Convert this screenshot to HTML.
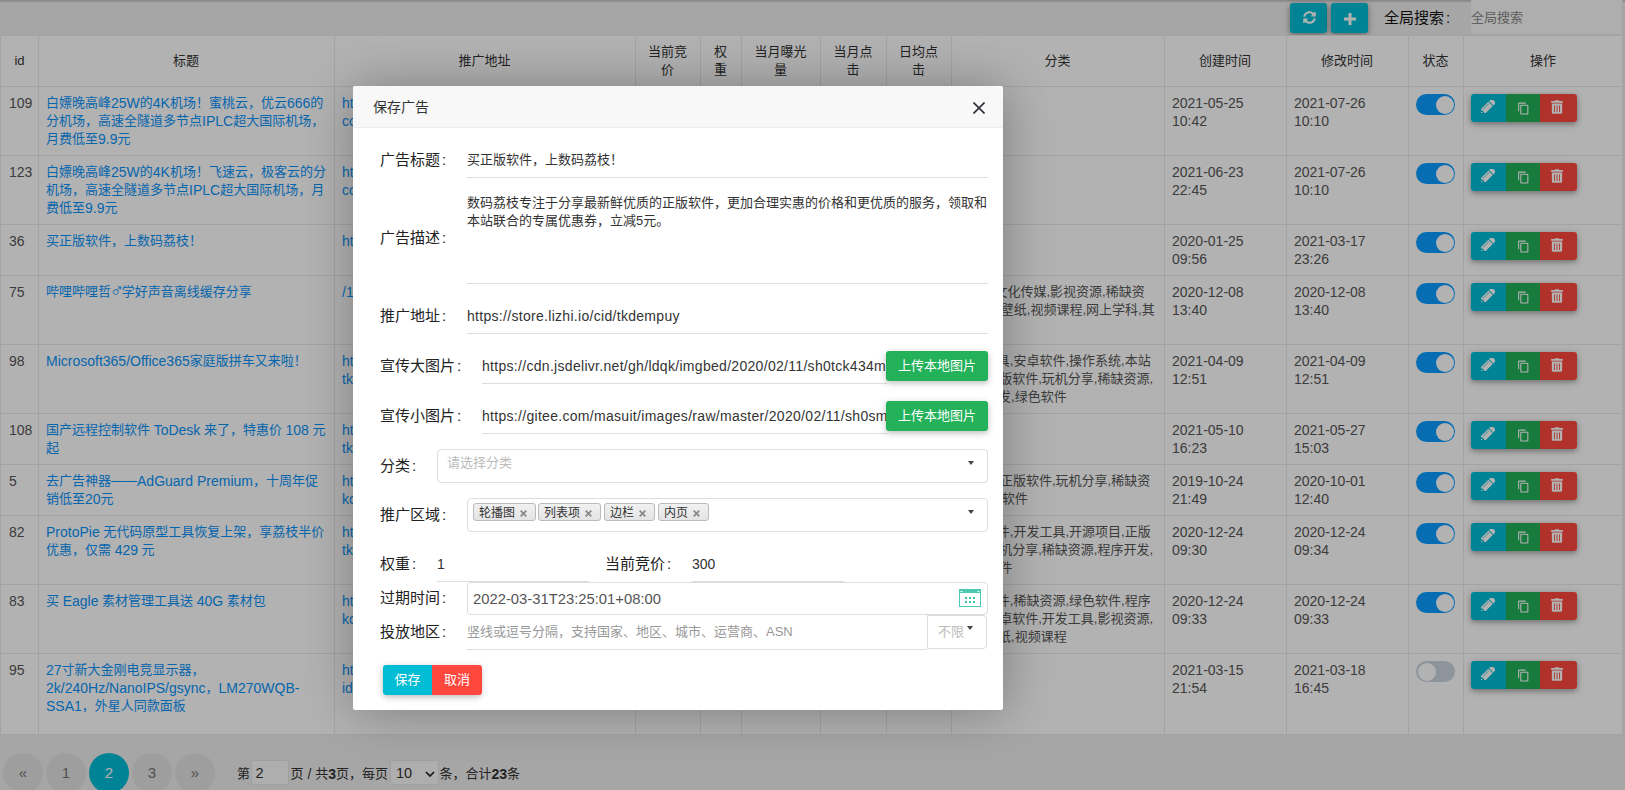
<!DOCTYPE html>
<html lang="zh-CN"><head><meta charset="utf-8"><title>广告管理</title>
<style>
*{box-sizing:border-box}
html,body{margin:0;padding:0}
body{width:1625px;height:790px;overflow:hidden;background:#eee;font-family:"Liberation Sans","Noto Sans CJK SC",sans-serif;font-size:13px;line-height:18px;color:#333;position:relative}
.abs{position:absolute}
#page{position:absolute;left:0;top:0;width:1625px;height:790px;overflow:hidden}
.topshade{position:absolute;left:0;top:0;width:1625px;height:3px;background:linear-gradient(#bbb,#eee)}
.tbtn{position:absolute;top:3px;width:37px;height:30px;background:#00bcd4;border-radius:3px;box-shadow:0 2px 5px rgba(0,0,0,.26),0 2px 10px rgba(0,0,0,.16)}
.slabel{position:absolute;left:1384px;top:8px;font-size:15px;line-height:20px;color:#111;white-space:nowrap}
.sinput{position:absolute;left:1471px;top:0;width:152px;height:34px;background:#fafafa;color:#888;font-size:13px;line-height:36px;white-space:nowrap;border-right:1px solid #e6e6e6}
#tbl{position:absolute;left:0;top:0;width:1625px;height:790px}
#tbg{position:absolute;left:0;top:35px;width:1623px;height:700px;background:#fff}
.vl{position:absolute;top:35px;width:1px;height:700px;background:#eaeaea}
.hl{position:absolute;left:0;width:1623px;height:1px;background:#eaeaea}
.th{position:absolute;top:36px;height:50px;display:flex;align-items:center;justify-content:center;text-align:center;color:#333}
.td{position:absolute;padding:8px 8px 0 8px;color:#565656}
.td.t{color:#0a93f8}
.td.u{color:#0a93f8;white-space:nowrap;overflow:hidden}
.cl{position:absolute;white-space:nowrap;color:#565656;line-height:18px}
.ms{display:inline-block;transform:scale(1.45);transform-origin:50% 60%;margin:0 .5px}
.l{font-size:14px;line-height:0;position:relative;top:1px}
.sw{position:absolute;width:39px;height:21px;border-radius:11px;background:#0a9cff}
.sw i{position:absolute;top:1.500px;right:1.500px;width:18px;height:18px;border-radius:50%;background:#fff}
.sw.off{background:#cbd5e0}
.sw.off i{right:auto;left:1.500px}
.bg{position:absolute;width:106px;height:28px;border-radius:3px;overflow:hidden;display:flex}
.bgs{position:absolute;width:106px;height:28px;border-radius:3px;box-shadow:0 2px 5px rgba(0,0,0,.26),0 2px 10px rgba(0,0,0,.16)}
.bg span{display:flex;align-items:center;justify-content:center;height:28px}
.b1{width:35px;background:#00bcd4}.b2{width:34px;background:#23b15a}.b3{width:37px;background:#fe483e}
.pg{position:absolute;top:753px;width:40px;height:40px;border-radius:50%;background:#e3e3e3;color:#747474;text-align:center;line-height:40px;font-size:15px}
.pg.a{background:#00bcd4;color:#fff}
.ptxt{position:absolute;top:764px;white-space:nowrap;line-height:20px;font-size:13px;color:#333}
.pin{position:absolute;top:760px;height:25px;border:1px solid #e6e6e6;background:#f9f9f9;border-radius:2px;line-height:24px;font-size:14.500px;color:#333}
#shade{position:absolute;left:0;top:0;width:1625px;height:790px;background:rgba(0,0,0,.3)}
#dlg{position:absolute;left:353px;top:86px;width:650px;height:624px;background:#fff;border-radius:2px;box-shadow:1px 1px 50px rgba(0,0,0,.3)}
#dlg .hd{position:absolute;left:0;top:0;width:650px;height:42px;background:#f8f8f8;border-bottom:1px solid #eee;border-radius:2px 2px 0 0;padding-left:20px;line-height:42px;font-size:14px;color:#333}
.lb{position:absolute;left:27px;font-size:15px;line-height:20px;color:#222;white-space:nowrap}
.cn{font-style:normal;margin-left:2px}
.ul{position:absolute;height:1px;background:#ddd}
.val{position:absolute;white-space:nowrap;color:#333;font-size:13px;line-height:18px;overflow:hidden}
.box{position:absolute;border:1px solid #ddd;border-radius:4px;background:#fff}
.tag{position:absolute;top:4px;height:18px;border:1px solid #bbb;border-radius:3px;background:linear-gradient(#f1f1f1,#e4e4e4);font-size:12px;line-height:17px;padding-top:1px;color:#333;padding-left:5px;white-space:nowrap}
.tag b{font-weight:bold;color:#888;font-size:12px;margin-left:4px}
.arr{position:absolute;width:0;height:0;border-left:3.5px solid transparent;border-right:3.5px solid transparent;border-top:4px solid #444}
.gbtn{position:absolute;left:533px;width:102px;height:30px;background:#23b15a;border-radius:3px;color:#fff;text-align:center;line-height:30px;font-size:13px;box-shadow:0 2px 5px rgba(0,0,0,.16),0 2px 10px rgba(0,0,0,.12)}
.fbtn{position:absolute;top:579px;height:30px;width:49px;color:#fff;text-align:center;line-height:30px;font-size:13px}
</style></head><body>
<div id="page">
<div class="topshade"></div>

<div class="tbtn" style="left:1290px"><svg style="position:absolute;left:12.600px;top:7.500px" width="13" height="13" viewBox="0 0 512 512"><path fill="#fff" d="M370.720 133.280C339.458 104.008 298.888 87.962 255.848 88c-77.458.068-144.328 53.178-162.791 126.850-1.344 5.363-6.122 9.150-11.651 9.150H24.103c-7.498 0-13.194-6.807-11.807-14.176C33.933 94.924 134.813 8 256 8c66.448 0 126.791 26.136 171.315 68.685L463.030 40.970C478.149 25.851 504 36.559 504 57.941V192c0 13.255-10.745 24-24 24H345.941c-21.382 0-32.090-25.851-16.971-40.971l41.750-41.749zM32 296h134.059c21.382 0 32.090 25.851 16.971 40.971l-41.750 41.750c31.262 29.273 71.835 45.319 114.876 45.280 77.418-.07 144.315-53.144 162.787-126.849 1.344-5.363 6.122-9.150 11.651-9.150h57.304c7.498 0 13.194 6.807 11.807 14.176C478.067 417.076 377.187 504 256 504c-66.448 0-126.791-26.136-171.315-68.685L48.970 471.030C33.851 486.149 8 475.441 8 454.059V320c0-13.255 10.745-24 24-24z"/></svg></div>
<div class="tbtn" style="left:1331px"><svg style="position:absolute;left:12.500px;top:9.500px" width="12" height="12" viewBox="0 0 12 12"><path fill="#fff" d="M4.500 0h3v4.500h4.500v3h-4.500v4.500h-3v-4.500H0v-3h4.500z"/></svg></div>
<div class="slabel">全局搜索<i class="cn">:</i></div>
<div class="sinput">全局搜索</div>
<div id="tbl"><div id="tbg"></div>
<div class="hl" style="top:35px"></div>
<div class="vl" style="left:0px"></div>
<div class="vl" style="left:38px"></div>
<div class="vl" style="left:334px"></div>
<div class="vl" style="left:635px"></div>
<div class="vl" style="left:700px"></div>
<div class="vl" style="left:741px"></div>
<div class="vl" style="left:820px"></div>
<div class="vl" style="left:886px"></div>
<div class="vl" style="left:951px"></div>
<div class="vl" style="left:1164px"></div>
<div class="vl" style="left:1286px"></div>
<div class="vl" style="left:1408px"></div>
<div class="vl" style="left:1463px"></div>
<div class="vl" style="left:1622px"></div>
<div class="hl" style="top:86px"></div>
<div class="hl" style="top:155px"></div>
<div class="hl" style="top:224px"></div>
<div class="hl" style="top:275px"></div>
<div class="hl" style="top:344px"></div>
<div class="hl" style="top:413px"></div>
<div class="hl" style="top:464px"></div>
<div class="hl" style="top:515px"></div>
<div class="hl" style="top:584px"></div>
<div class="hl" style="top:653px"></div>
<div class="hl" style="top:734px"></div>
<div class="th" style="left:1px;width:37px"><span>id</span></div>
<div class="th" style="left:38px;width:296px"><span>标题</span></div>
<div class="th" style="left:334px;width:301px"><span>推广地址</span></div>
<div class="th" style="left:635px;width:65px"><span>当前竞<br>价</span></div>
<div class="th" style="left:700px;width:41px"><span>权<br>重</span></div>
<div class="th" style="left:741px;width:79px"><span>当月曝光<br>量</span></div>
<div class="th" style="left:820px;width:66px"><span>当月点<br>击</span></div>
<div class="th" style="left:886px;width:65px"><span>日均点<br>击</span></div>
<div class="th" style="left:951px;width:213px"><span>分类</span></div>
<div class="th" style="left:1164px;width:122px"><span>创建时间</span></div>
<div class="th" style="left:1286px;width:122px"><span>修改时间</span></div>
<div class="th" style="left:1408px;width:55px"><span>状态</span></div>
<div class="th" style="left:1463px;width:160px"><span>操作</span></div>
<div class="td " style="left:1px;top:86px;width:37px;height:69px;"><span class="l">109</span></div>
<div class="td t" style="left:38px;top:86px;width:296px;height:69px;">白嫖晚高峰<span class="l">25W</span>的<span class="l">4K</span>机场！蜜桃云，优云<span class="l">666</span>的分机场，高速全隧道多节点<span class="l">IPLC</span>超大国际机场，月费低至<span class="l">9.9</span>元</div>
<div class="td u" style="left:334px;top:86px;width:301px;height:69px;"><span class="l">https://store.example/</span><br><span class="l">co</span></div>
<div class="td " style="left:1164px;top:86px;width:122px;height:69px;"><span class="l">2021-05-25</span><br><span class="l">10:42</span></div>
<div class="td " style="left:1286px;top:86px;width:122px;height:69px;"><span class="l">2021-07-26</span><br><span class="l">10:10</span></div>
<div class="sw" style="left:1416px;top:94px"><i></i></div>
<div class="bgs" style="left:1471px;top:94px"></div>
<div class="bg" style="left:1471px;top:94px"><span class="b1"><svg class="ic" style="position:relative;left:-.7px;top:-1.400px" viewBox="256 256 1387 1280" width="14.500" height="13.500"><path fill="#fff" d="M491 1536l91-91-235-235-91 91v107h128v128h107zm523-928q0-22-22-22-10 0-17 7l-542 542q-7 7-7 17 0 22 22 22 10 0 17-7l542-542q7-7 7-17zm-54-192l416 416-832 832h-416v-416zm683 96q0 53-37 90l-166 166-416-416 166-165q36-38 90-38 53 0 91 38l235 234q37 39 37 91z"/></svg></span><span class="b2"><svg class="ic" style="position:relative;left:.5px;top:0" viewBox="0 0 24 24" width="13" height="13"><path fill="#fff" d="M16 1H4c-1.100 0-2 .9-2 2v14h2V3h12V1zm3 4H8c-1.100 0-2 .9-2 2v14c0 1.100.9 2 2 2h11c1.100 0 2-.9 2-2V7c0-1.100-.9-2-2-2zm0 16H8V7h11v14z"/></svg></span><span class="b3"><svg class="ic" style="position:relative;left:-2px;top:-1.400px" viewBox="0 0 448 512" width="12" height="14"><path fill="#fff" d="M32 464a48 48 0 0 0 48 48h288a48 48 0 0 0 48-48V128H32zm272-256a16 16 0 0 1 32 0v224a16 16 0 0 1-32 0zm-96 0a16 16 0 0 1 32 0v224a16 16 0 0 1-32 0zm-96 0a16 16 0 0 1 32 0v224a16 16 0 0 1-32 0zM432 32H312l-9.400-18.700A24 24 0 0 0 281.100 0H166.800a23.720 23.720 0 0 0-21.400 13.300L136 32H16A16 16 0 0 0 0 48v32a16 16 0 0 0 16 16h416a16 16 0 0 0 16-16V48a16 16 0 0 0-16-16z"/></svg></span></div>
<div class="td " style="left:1px;top:155px;width:37px;height:69px;"><span class="l">123</span></div>
<div class="td t" style="left:38px;top:155px;width:296px;height:69px;">白嫖晚高峰<span class="l">25W</span>的<span class="l">4K</span>机场！飞速云，极客云的分机场，高速全隧道多节点<span class="l">IPLC</span>超大国际机场，月费低至<span class="l">9.9</span>元</div>
<div class="td u" style="left:334px;top:155px;width:301px;height:69px;"><span class="l">https://store.example/</span><br><span class="l">co</span></div>
<div class="td " style="left:1164px;top:155px;width:122px;height:69px;"><span class="l">2021-06-23</span><br><span class="l">22:45</span></div>
<div class="td " style="left:1286px;top:155px;width:122px;height:69px;"><span class="l">2021-07-26</span><br><span class="l">10:10</span></div>
<div class="sw" style="left:1416px;top:163px"><i></i></div>
<div class="bgs" style="left:1471px;top:163px"></div>
<div class="bg" style="left:1471px;top:163px"><span class="b1"><svg class="ic" style="position:relative;left:-.7px;top:-1.400px" viewBox="256 256 1387 1280" width="14.500" height="13.500"><path fill="#fff" d="M491 1536l91-91-235-235-91 91v107h128v128h107zm523-928q0-22-22-22-10 0-17 7l-542 542q-7 7-7 17 0 22 22 22 10 0 17-7l542-542q7-7 7-17zm-54-192l416 416-832 832h-416v-416zm683 96q0 53-37 90l-166 166-416-416 166-165q36-38 90-38 53 0 91 38l235 234q37 39 37 91z"/></svg></span><span class="b2"><svg class="ic" style="position:relative;left:.5px;top:0" viewBox="0 0 24 24" width="13" height="13"><path fill="#fff" d="M16 1H4c-1.100 0-2 .9-2 2v14h2V3h12V1zm3 4H8c-1.100 0-2 .9-2 2v14c0 1.100.9 2 2 2h11c1.100 0 2-.9 2-2V7c0-1.100-.9-2-2-2zm0 16H8V7h11v14z"/></svg></span><span class="b3"><svg class="ic" style="position:relative;left:-2px;top:-1.400px" viewBox="0 0 448 512" width="12" height="14"><path fill="#fff" d="M32 464a48 48 0 0 0 48 48h288a48 48 0 0 0 48-48V128H32zm272-256a16 16 0 0 1 32 0v224a16 16 0 0 1-32 0zm-96 0a16 16 0 0 1 32 0v224a16 16 0 0 1-32 0zm-96 0a16 16 0 0 1 32 0v224a16 16 0 0 1-32 0zM432 32H312l-9.400-18.700A24 24 0 0 0 281.100 0H166.800a23.720 23.720 0 0 0-21.400 13.300L136 32H16A16 16 0 0 0 0 48v32a16 16 0 0 0 16 16h416a16 16 0 0 0 16-16V48a16 16 0 0 0-16-16z"/></svg></span></div>
<div class="td " style="left:1px;top:224px;width:37px;height:51px;"><span class="l">36</span></div>
<div class="td t" style="left:38px;top:224px;width:296px;height:51px;">买正版软件，上数码荔枝！</div>
<div class="td u" style="left:334px;top:224px;width:301px;height:51px;"><span class="l">https://store.example/</span></div>
<div class="td " style="left:1164px;top:224px;width:122px;height:51px;"><span class="l">2020-01-25</span><br><span class="l">09:56</span></div>
<div class="td " style="left:1286px;top:224px;width:122px;height:51px;"><span class="l">2021-03-17</span><br><span class="l">23:26</span></div>
<div class="sw" style="left:1416px;top:232px"><i></i></div>
<div class="bgs" style="left:1471px;top:232px"></div>
<div class="bg" style="left:1471px;top:232px"><span class="b1"><svg class="ic" style="position:relative;left:-.7px;top:-1.400px" viewBox="256 256 1387 1280" width="14.500" height="13.500"><path fill="#fff" d="M491 1536l91-91-235-235-91 91v107h128v128h107zm523-928q0-22-22-22-10 0-17 7l-542 542q-7 7-7 17 0 22 22 22 10 0 17-7l542-542q7-7 7-17zm-54-192l416 416-832 832h-416v-416zm683 96q0 53-37 90l-166 166-416-416 166-165q36-38 90-38 53 0 91 38l235 234q37 39 37 91z"/></svg></span><span class="b2"><svg class="ic" style="position:relative;left:.5px;top:0" viewBox="0 0 24 24" width="13" height="13"><path fill="#fff" d="M16 1H4c-1.100 0-2 .9-2 2v14h2V3h12V1zm3 4H8c-1.100 0-2 .9-2 2v14c0 1.100.9 2 2 2h11c1.100 0 2-.9 2-2V7c0-1.100-.9-2-2-2zm0 16H8V7h11v14z"/></svg></span><span class="b3"><svg class="ic" style="position:relative;left:-2px;top:-1.400px" viewBox="0 0 448 512" width="12" height="14"><path fill="#fff" d="M32 464a48 48 0 0 0 48 48h288a48 48 0 0 0 48-48V128H32zm272-256a16 16 0 0 1 32 0v224a16 16 0 0 1-32 0zm-96 0a16 16 0 0 1 32 0v224a16 16 0 0 1-32 0zm-96 0a16 16 0 0 1 32 0v224a16 16 0 0 1-32 0zM432 32H312l-9.400-18.700A24 24 0 0 0 281.100 0H166.800a23.720 23.720 0 0 0-21.400 13.300L136 32H16A16 16 0 0 0 0 48v32a16 16 0 0 0 16 16h416a16 16 0 0 0 16-16V48a16 16 0 0 0-16-16z"/></svg></span></div>
<div class="td " style="left:1px;top:275px;width:37px;height:69px;"><span class="l">75</span></div>
<div class="td t" style="left:38px;top:275px;width:296px;height:69px;">哔哩哔哩哲<span class="ms">♂</span>学好声音离线缓存分享</div>
<div class="td u" style="left:334px;top:275px;width:301px;height:69px;"><span class="l">/1</span></div>
<div class="cl" style="right:480.3px;top:283px">文化传媒,影视资源,稀缺资</div>
<div class="cl" style="right:470.3px;top:301px">壁纸,视频课程,网上学科,其</div>
<div class="td " style="left:1164px;top:275px;width:122px;height:69px;"><span class="l">2020-12-08</span><br><span class="l">13:40</span></div>
<div class="td " style="left:1286px;top:275px;width:122px;height:69px;"><span class="l">2020-12-08</span><br><span class="l">13:40</span></div>
<div class="sw" style="left:1416px;top:283px"><i></i></div>
<div class="bgs" style="left:1471px;top:283px"></div>
<div class="bg" style="left:1471px;top:283px"><span class="b1"><svg class="ic" style="position:relative;left:-.7px;top:-1.400px" viewBox="256 256 1387 1280" width="14.500" height="13.500"><path fill="#fff" d="M491 1536l91-91-235-235-91 91v107h128v128h107zm523-928q0-22-22-22-10 0-17 7l-542 542q-7 7-7 17 0 22 22 22 10 0 17-7l542-542q7-7 7-17zm-54-192l416 416-832 832h-416v-416zm683 96q0 53-37 90l-166 166-416-416 166-165q36-38 90-38 53 0 91 38l235 234q37 39 37 91z"/></svg></span><span class="b2"><svg class="ic" style="position:relative;left:.5px;top:0" viewBox="0 0 24 24" width="13" height="13"><path fill="#fff" d="M16 1H4c-1.100 0-2 .9-2 2v14h2V3h12V1zm3 4H8c-1.100 0-2 .9-2 2v14c0 1.100.9 2 2 2h11c1.100 0 2-.9 2-2V7c0-1.100-.9-2-2-2zm0 16H8V7h11v14z"/></svg></span><span class="b3"><svg class="ic" style="position:relative;left:-2px;top:-1.400px" viewBox="0 0 448 512" width="12" height="14"><path fill="#fff" d="M32 464a48 48 0 0 0 48 48h288a48 48 0 0 0 48-48V128H32zm272-256a16 16 0 0 1 32 0v224a16 16 0 0 1-32 0zm-96 0a16 16 0 0 1 32 0v224a16 16 0 0 1-32 0zm-96 0a16 16 0 0 1 32 0v224a16 16 0 0 1-32 0zM432 32H312l-9.400-18.700A24 24 0 0 0 281.100 0H166.800a23.720 23.720 0 0 0-21.400 13.300L136 32H16A16 16 0 0 0 0 48v32a16 16 0 0 0 16 16h416a16 16 0 0 0 16-16V48a16 16 0 0 0-16-16z"/></svg></span></div>
<div class="td " style="left:1px;top:344px;width:37px;height:69px;"><span class="l">98</span></div>
<div class="td t" style="left:38px;top:344px;width:296px;height:69px;"><span class="l">Microsoft365/Office365</span>家庭版拼车又来啦！</div>
<div class="td u" style="left:334px;top:344px;width:301px;height:69px;"><span class="l">https://store.example/</span><br><span class="l">tk</span></div>
<div class="cl" style="right:474.3px;top:352px">具,安卓软件,操作系统,本站</div>
<div class="cl" style="right:472.0px;top:370px">版软件,玩机分享,稀缺资源,</div>
<div class="cl" style="right:558.3px;top:388px">发,绿色软件</div>
<div class="td " style="left:1164px;top:344px;width:122px;height:69px;"><span class="l">2021-04-09</span><br><span class="l">12:51</span></div>
<div class="td " style="left:1286px;top:344px;width:122px;height:69px;"><span class="l">2021-04-09</span><br><span class="l">12:51</span></div>
<div class="sw" style="left:1416px;top:352px"><i></i></div>
<div class="bgs" style="left:1471px;top:352px"></div>
<div class="bg" style="left:1471px;top:352px"><span class="b1"><svg class="ic" style="position:relative;left:-.7px;top:-1.400px" viewBox="256 256 1387 1280" width="14.500" height="13.500"><path fill="#fff" d="M491 1536l91-91-235-235-91 91v107h128v128h107zm523-928q0-22-22-22-10 0-17 7l-542 542q-7 7-7 17 0 22 22 22 10 0 17-7l542-542q7-7 7-17zm-54-192l416 416-832 832h-416v-416zm683 96q0 53-37 90l-166 166-416-416 166-165q36-38 90-38 53 0 91 38l235 234q37 39 37 91z"/></svg></span><span class="b2"><svg class="ic" style="position:relative;left:.5px;top:0" viewBox="0 0 24 24" width="13" height="13"><path fill="#fff" d="M16 1H4c-1.100 0-2 .9-2 2v14h2V3h12V1zm3 4H8c-1.100 0-2 .9-2 2v14c0 1.100.9 2 2 2h11c1.100 0 2-.9 2-2V7c0-1.100-.9-2-2-2zm0 16H8V7h11v14z"/></svg></span><span class="b3"><svg class="ic" style="position:relative;left:-2px;top:-1.400px" viewBox="0 0 448 512" width="12" height="14"><path fill="#fff" d="M32 464a48 48 0 0 0 48 48h288a48 48 0 0 0 48-48V128H32zm272-256a16 16 0 0 1 32 0v224a16 16 0 0 1-32 0zm-96 0a16 16 0 0 1 32 0v224a16 16 0 0 1-32 0zm-96 0a16 16 0 0 1 32 0v224a16 16 0 0 1-32 0zM432 32H312l-9.400-18.700A24 24 0 0 0 281.100 0H166.800a23.720 23.720 0 0 0-21.400 13.300L136 32H16A16 16 0 0 0 0 48v32a16 16 0 0 0 16 16h416a16 16 0 0 0 16-16V48a16 16 0 0 0-16-16z"/></svg></span></div>
<div class="td " style="left:1px;top:413px;width:37px;height:51px;"><span class="l">108</span></div>
<div class="td t" style="left:38px;top:413px;width:296px;height:51px;">国产远程控制软件 <span class="l">ToDesk</span> 来了，特惠价 <span class="l">108</span> 元起</div>
<div class="td u" style="left:334px;top:413px;width:301px;height:51px;"><span class="l">https://store.example/</span><br><span class="l">tk</span></div>
<div class="td " style="left:1164px;top:413px;width:122px;height:51px;"><span class="l">2021-05-10</span><br><span class="l">16:23</span></div>
<div class="td " style="left:1286px;top:413px;width:122px;height:51px;"><span class="l">2021-05-27</span><br><span class="l">15:03</span></div>
<div class="sw" style="left:1416px;top:421px"><i></i></div>
<div class="bgs" style="left:1471px;top:421px"></div>
<div class="bg" style="left:1471px;top:421px"><span class="b1"><svg class="ic" style="position:relative;left:-.7px;top:-1.400px" viewBox="256 256 1387 1280" width="14.500" height="13.500"><path fill="#fff" d="M491 1536l91-91-235-235-91 91v107h128v128h107zm523-928q0-22-22-22-10 0-17 7l-542 542q-7 7-7 17 0 22 22 22 10 0 17-7l542-542q7-7 7-17zm-54-192l416 416-832 832h-416v-416zm683 96q0 53-37 90l-166 166-416-416 166-165q36-38 90-38 53 0 91 38l235 234q37 39 37 91z"/></svg></span><span class="b2"><svg class="ic" style="position:relative;left:.5px;top:0" viewBox="0 0 24 24" width="13" height="13"><path fill="#fff" d="M16 1H4c-1.100 0-2 .9-2 2v14h2V3h12V1zm3 4H8c-1.100 0-2 .9-2 2v14c0 1.100.9 2 2 2h11c1.100 0 2-.9 2-2V7c0-1.100-.9-2-2-2zm0 16H8V7h11v14z"/></svg></span><span class="b3"><svg class="ic" style="position:relative;left:-2px;top:-1.400px" viewBox="0 0 448 512" width="12" height="14"><path fill="#fff" d="M32 464a48 48 0 0 0 48 48h288a48 48 0 0 0 48-48V128H32zm272-256a16 16 0 0 1 32 0v224a16 16 0 0 1-32 0zm-96 0a16 16 0 0 1 32 0v224a16 16 0 0 1-32 0zm-96 0a16 16 0 0 1 32 0v224a16 16 0 0 1-32 0zM432 32H312l-9.400-18.700A24 24 0 0 0 281.100 0H166.800a23.720 23.720 0 0 0-21.400 13.300L136 32H16A16 16 0 0 0 0 48v32a16 16 0 0 0 16 16h416a16 16 0 0 0 16-16V48a16 16 0 0 0-16-16z"/></svg></span></div>
<div class="td " style="left:1px;top:464px;width:37px;height:51px;"><span class="l">5</span></div>
<div class="td t" style="left:38px;top:464px;width:296px;height:51px;">去广告神器——<span class="l">AdGuard Premium</span>，十周年促销低至<span class="l">20</span>元</div>
<div class="td u" style="left:334px;top:464px;width:301px;height:51px;"><span class="l">https://store.example/</span><br><span class="l">kc</span></div>
<div class="cl" style="right:474.8px;top:472px">正版软件,玩机分享,稀缺资</div>
<div class="cl" style="right:597.3px;top:490px">软件</div>
<div class="td " style="left:1164px;top:464px;width:122px;height:51px;"><span class="l">2019-10-24</span><br><span class="l">21:49</span></div>
<div class="td " style="left:1286px;top:464px;width:122px;height:51px;"><span class="l">2020-10-01</span><br><span class="l">12:40</span></div>
<div class="sw" style="left:1416px;top:472px"><i></i></div>
<div class="bgs" style="left:1471px;top:472px"></div>
<div class="bg" style="left:1471px;top:472px"><span class="b1"><svg class="ic" style="position:relative;left:-.7px;top:-1.400px" viewBox="256 256 1387 1280" width="14.500" height="13.500"><path fill="#fff" d="M491 1536l91-91-235-235-91 91v107h128v128h107zm523-928q0-22-22-22-10 0-17 7l-542 542q-7 7-7 17 0 22 22 22 10 0 17-7l542-542q7-7 7-17zm-54-192l416 416-832 832h-416v-416zm683 96q0 53-37 90l-166 166-416-416 166-165q36-38 90-38 53 0 91 38l235 234q37 39 37 91z"/></svg></span><span class="b2"><svg class="ic" style="position:relative;left:.5px;top:0" viewBox="0 0 24 24" width="13" height="13"><path fill="#fff" d="M16 1H4c-1.100 0-2 .9-2 2v14h2V3h12V1zm3 4H8c-1.100 0-2 .9-2 2v14c0 1.100.9 2 2 2h11c1.100 0 2-.9 2-2V7c0-1.100-.9-2-2-2zm0 16H8V7h11v14z"/></svg></span><span class="b3"><svg class="ic" style="position:relative;left:-2px;top:-1.400px" viewBox="0 0 448 512" width="12" height="14"><path fill="#fff" d="M32 464a48 48 0 0 0 48 48h288a48 48 0 0 0 48-48V128H32zm272-256a16 16 0 0 1 32 0v224a16 16 0 0 1-32 0zm-96 0a16 16 0 0 1 32 0v224a16 16 0 0 1-32 0zm-96 0a16 16 0 0 1 32 0v224a16 16 0 0 1-32 0zM432 32H312l-9.400-18.700A24 24 0 0 0 281.100 0H166.800a23.720 23.720 0 0 0-21.400 13.300L136 32H16A16 16 0 0 0 0 48v32a16 16 0 0 0 16 16h416a16 16 0 0 0 16-16V48a16 16 0 0 0-16-16z"/></svg></span></div>
<div class="td " style="left:1px;top:515px;width:37px;height:69px;"><span class="l">82</span></div>
<div class="td t" style="left:38px;top:515px;width:296px;height:69px;"><span class="l">ProtoPie</span> 无代码原型工具恢复上架，享荔枝半价优惠，仅需 <span class="l">429</span> 元</div>
<div class="td u" style="left:334px;top:515px;width:301px;height:69px;"><span class="l">https://store.example/</span><br><span class="l">tk</span></div>
<div class="cl" style="right:474.3px;top:523px">件,开发工具,开源项目,正版</div>
<div class="cl" style="right:472.0px;top:541px">机分享,稀缺资源,程序开发,</div>
<div class="cl" style="right:612.7px;top:559px">件</div>
<div class="td " style="left:1164px;top:515px;width:122px;height:69px;"><span class="l">2020-12-24</span><br><span class="l">09:30</span></div>
<div class="td " style="left:1286px;top:515px;width:122px;height:69px;"><span class="l">2020-12-24</span><br><span class="l">09:34</span></div>
<div class="sw" style="left:1416px;top:523px"><i></i></div>
<div class="bgs" style="left:1471px;top:523px"></div>
<div class="bg" style="left:1471px;top:523px"><span class="b1"><svg class="ic" style="position:relative;left:-.7px;top:-1.400px" viewBox="256 256 1387 1280" width="14.500" height="13.500"><path fill="#fff" d="M491 1536l91-91-235-235-91 91v107h128v128h107zm523-928q0-22-22-22-10 0-17 7l-542 542q-7 7-7 17 0 22 22 22 10 0 17-7l542-542q7-7 7-17zm-54-192l416 416-832 832h-416v-416zm683 96q0 53-37 90l-166 166-416-416 166-165q36-38 90-38 53 0 91 38l235 234q37 39 37 91z"/></svg></span><span class="b2"><svg class="ic" style="position:relative;left:.5px;top:0" viewBox="0 0 24 24" width="13" height="13"><path fill="#fff" d="M16 1H4c-1.100 0-2 .9-2 2v14h2V3h12V1zm3 4H8c-1.100 0-2 .9-2 2v14c0 1.100.9 2 2 2h11c1.100 0 2-.9 2-2V7c0-1.100-.9-2-2-2zm0 16H8V7h11v14z"/></svg></span><span class="b3"><svg class="ic" style="position:relative;left:-2px;top:-1.400px" viewBox="0 0 448 512" width="12" height="14"><path fill="#fff" d="M32 464a48 48 0 0 0 48 48h288a48 48 0 0 0 48-48V128H32zm272-256a16 16 0 0 1 32 0v224a16 16 0 0 1-32 0zm-96 0a16 16 0 0 1 32 0v224a16 16 0 0 1-32 0zm-96 0a16 16 0 0 1 32 0v224a16 16 0 0 1-32 0zM432 32H312l-9.400-18.700A24 24 0 0 0 281.100 0H166.800a23.720 23.720 0 0 0-21.400 13.300L136 32H16A16 16 0 0 0 0 48v32a16 16 0 0 0 16 16h416a16 16 0 0 0 16-16V48a16 16 0 0 0-16-16z"/></svg></span></div>
<div class="td " style="left:1px;top:584px;width:37px;height:69px;"><span class="l">83</span></div>
<div class="td t" style="left:38px;top:584px;width:296px;height:69px;">买 <span class="l">Eagle</span> 素材管理工具送 <span class="l">40G</span> 素材包</div>
<div class="td u" style="left:334px;top:584px;width:301px;height:69px;"><span class="l">https://store.example/</span><br><span class="l">kc</span></div>
<div class="cl" style="right:474.3px;top:592px">件,稀缺资源,绿色软件,程序</div>
<div class="cl" style="right:472.0px;top:610px">卓软件,开发工具,影视资源,</div>
<div class="cl" style="right:558.3px;top:628px">纸,视频课程</div>
<div class="td " style="left:1164px;top:584px;width:122px;height:69px;"><span class="l">2020-12-24</span><br><span class="l">09:33</span></div>
<div class="td " style="left:1286px;top:584px;width:122px;height:69px;"><span class="l">2020-12-24</span><br><span class="l">09:33</span></div>
<div class="sw" style="left:1416px;top:592px"><i></i></div>
<div class="bgs" style="left:1471px;top:592px"></div>
<div class="bg" style="left:1471px;top:592px"><span class="b1"><svg class="ic" style="position:relative;left:-.7px;top:-1.400px" viewBox="256 256 1387 1280" width="14.500" height="13.500"><path fill="#fff" d="M491 1536l91-91-235-235-91 91v107h128v128h107zm523-928q0-22-22-22-10 0-17 7l-542 542q-7 7-7 17 0 22 22 22 10 0 17-7l542-542q7-7 7-17zm-54-192l416 416-832 832h-416v-416zm683 96q0 53-37 90l-166 166-416-416 166-165q36-38 90-38 53 0 91 38l235 234q37 39 37 91z"/></svg></span><span class="b2"><svg class="ic" style="position:relative;left:.5px;top:0" viewBox="0 0 24 24" width="13" height="13"><path fill="#fff" d="M16 1H4c-1.100 0-2 .9-2 2v14h2V3h12V1zm3 4H8c-1.100 0-2 .9-2 2v14c0 1.100.9 2 2 2h11c1.100 0 2-.9 2-2V7c0-1.100-.9-2-2-2zm0 16H8V7h11v14z"/></svg></span><span class="b3"><svg class="ic" style="position:relative;left:-2px;top:-1.400px" viewBox="0 0 448 512" width="12" height="14"><path fill="#fff" d="M32 464a48 48 0 0 0 48 48h288a48 48 0 0 0 48-48V128H32zm272-256a16 16 0 0 1 32 0v224a16 16 0 0 1-32 0zm-96 0a16 16 0 0 1 32 0v224a16 16 0 0 1-32 0zm-96 0a16 16 0 0 1 32 0v224a16 16 0 0 1-32 0zM432 32H312l-9.400-18.700A24 24 0 0 0 281.100 0H166.800a23.720 23.720 0 0 0-21.400 13.300L136 32H16A16 16 0 0 0 0 48v32a16 16 0 0 0 16 16h416a16 16 0 0 0 16-16V48a16 16 0 0 0-16-16z"/></svg></span></div>
<div class="td " style="left:1px;top:653px;width:37px;height:82px;"><span class="l">95</span></div>
<div class="td t" style="left:38px;top:653px;width:296px;height:82px;"><span class="l">27</span>寸新大金刚电竞显示器，<span class="l">2k/240Hz/NanoIPS/gsync</span>，<span class="l">LM270WQB-SSA1</span>，外星人同款面板</div>
<div class="td u" style="left:334px;top:653px;width:301px;height:82px;"><span class="l">https://store.example/</span><br><span class="l">id</span></div>
<div class="td " style="left:1164px;top:653px;width:122px;height:82px;"><span class="l">2021-03-15</span><br><span class="l">21:54</span></div>
<div class="td " style="left:1286px;top:653px;width:122px;height:82px;"><span class="l">2021-03-18</span><br><span class="l">16:45</span></div>
<div class="sw off" style="left:1416px;top:661px"><i></i></div>
<div class="bgs" style="left:1471px;top:661px"></div>
<div class="bg" style="left:1471px;top:661px"><span class="b1"><svg class="ic" style="position:relative;left:-.7px;top:-1.400px" viewBox="256 256 1387 1280" width="14.500" height="13.500"><path fill="#fff" d="M491 1536l91-91-235-235-91 91v107h128v128h107zm523-928q0-22-22-22-10 0-17 7l-542 542q-7 7-7 17 0 22 22 22 10 0 17-7l542-542q7-7 7-17zm-54-192l416 416-832 832h-416v-416zm683 96q0 53-37 90l-166 166-416-416 166-165q36-38 90-38 53 0 91 38l235 234q37 39 37 91z"/></svg></span><span class="b2"><svg class="ic" style="position:relative;left:.5px;top:0" viewBox="0 0 24 24" width="13" height="13"><path fill="#fff" d="M16 1H4c-1.100 0-2 .9-2 2v14h2V3h12V1zm3 4H8c-1.100 0-2 .9-2 2v14c0 1.100.9 2 2 2h11c1.100 0 2-.9 2-2V7c0-1.100-.9-2-2-2zm0 16H8V7h11v14z"/></svg></span><span class="b3"><svg class="ic" style="position:relative;left:-2px;top:-1.400px" viewBox="0 0 448 512" width="12" height="14"><path fill="#fff" d="M32 464a48 48 0 0 0 48 48h288a48 48 0 0 0 48-48V128H32zm272-256a16 16 0 0 1 32 0v224a16 16 0 0 1-32 0zm-96 0a16 16 0 0 1 32 0v224a16 16 0 0 1-32 0zm-96 0a16 16 0 0 1 32 0v224a16 16 0 0 1-32 0zM432 32H312l-9.400-18.700A24 24 0 0 0 281.100 0H166.800a23.720 23.720 0 0 0-21.400 13.300L136 32H16A16 16 0 0 0 0 48v32a16 16 0 0 0 16 16h416a16 16 0 0 0 16-16V48a16 16 0 0 0-16-16z"/></svg></span></div>
</div>
<div class="pg" style="left:3px">«</div>
<div class="pg" style="left:46px">1</div>
<div class="pg a" style="left:89px">2</div>
<div class="pg" style="left:132px">3</div>
<div class="pg" style="left:175px">»</div>
<div class="ptxt" style="left:237px">第</div>
<div class="pin" style="left:250.500px;width:38.500px"><span style="position:absolute;left:4px;top:0">2</span></div>
<div class="ptxt" style="left:290.500px">页<span class="l"> / </span>共<b class="l">3</b>页，每页</div>
<div class="pin" style="left:389.500px;width:49px"><span style="position:absolute;left:5.500px;top:0">10</span><svg style="position:absolute;left:34.500px;top:9.500px" width="10" height="7" viewBox="0 0 10 7"><path d="M1 1l4 4 4-4" stroke="#222" stroke-width="1.700" fill="none"/></svg></div>
<div class="ptxt" style="left:439.500px">条，合计<b class="l">23</b>条</div>
<div id="shade"></div>
<div id="dlg">
<div class="hd">保存广告</div>
<svg class="abs" style="left:620px;top:16px" width="12" height="12" viewBox="0 0 12 12"><path d="M.5.500l11 11M11.500.500l-11 11" stroke="#2e2d3c" stroke-width="1.600" fill="none"/></svg>
<div class="lb" style="top:64px">广告标题<i class="cn">:</i></div>
<div class="val" style="left:114px;top:65px">买正版软件，上数码荔枝！</div>
<div class="ul" style="left:114px;top:91px;width:521px"></div>
<div class="lb" style="top:142px">广告描述<i class="cn">:</i></div>
<div class="val" style="left:114px;top:108px;width:524px;white-space:normal">数码荔枝专注于分享最新鲜优质的正版软件，更加合理实惠的价格和更优质的服务，领取和本站联合的专属优惠券，立减5元。</div>
<div class="ul" style="left:114px;top:197px;width:521px"></div>
<div class="lb" style="top:220px">推广地址<i class="cn">:</i></div>
<div class="val" style="left:114px;top:221px;font-size:14px;letter-spacing:.3px">https://store.lizhi.io/cid/tkdempuy</div>
<div class="ul" style="left:114px;top:247px;width:521px"></div>
<div class="lb" style="top:270px">宣传大图片<i class="cn">:</i></div>
<div class="val" style="left:129px;top:271px;width:404px;font-size:14px;letter-spacing:.3px">https://cdn.jsdelivr.net/gh/ldqk/imgbed/2020/02/11/sh0tck434m.jpg</div>
<div class="ul" style="left:129px;top:297px;width:405px"></div>
<div class="gbtn" style="top:265px">上传本地图片</div>
<div class="lb" style="top:320px">宣传小图片<i class="cn">:</i></div>
<div class="val" style="left:129px;top:321px;width:404px;font-size:14px;letter-spacing:.3px">https://gitee.com/masuit/images/raw/master/2020/02/11/sh0smj.jpg</div>
<div class="ul" style="left:129px;top:347px;width:405px"></div>
<div class="gbtn" style="top:315px">上传本地图片</div>
<div class="lb" style="top:370px">分类<i class="cn">:</i></div>
<div class="box" style="left:84px;top:363px;width:551px;height:34px"><div class="val" style="left:9px;top:4px;color:#bbb">请选择分类</div><div class="arr" style="left:530px;top:11px"></div></div>
<div class="lb" style="top:419px">推广区域<i class="cn">:</i></div>
<div class="box" style="left:114px;top:412px;width:521px;height:34px">
<div class="tag" style="left:5px;width:63px">轮播图<svg style="margin-left:5px;position:relative;top:0" width="7" height="7" viewBox="0 0 7 7"><path d="M.7.700l5.600 5.600M6.300.700L.7 6.300" stroke="#8c8c8c" stroke-width="1.900" fill="none"/></svg></div>
<div class="tag" style="left:70px;width:63px">列表项<svg style="margin-left:5px;position:relative;top:0" width="7" height="7" viewBox="0 0 7 7"><path d="M.7.700l5.600 5.600M6.300.700L.7 6.300" stroke="#8c8c8c" stroke-width="1.900" fill="none"/></svg></div>
<div class="tag" style="left:136px;width:51px">边栏<svg style="margin-left:5px;position:relative;top:0" width="7" height="7" viewBox="0 0 7 7"><path d="M.7.700l5.600 5.600M6.300.700L.7 6.300" stroke="#8c8c8c" stroke-width="1.900" fill="none"/></svg></div>
<div class="tag" style="left:190px;width:51px">内页<svg style="margin-left:5px;position:relative;top:0" width="7" height="7" viewBox="0 0 7 7"><path d="M.7.700l5.600 5.600M6.300.700L.7 6.300" stroke="#8c8c8c" stroke-width="1.900" fill="none"/></svg></div>
<div class="arr" style="left:500px;top:11px"></div></div>
<div class="lb" style="top:468px">权重<i class="cn">:</i></div>
<div class="val" style="left:84px;top:469px;font-size:14px">1</div>
<div class="ul" style="left:84px;top:495px;width:152px"></div>
<div class="lb" style="left:252px;top:468px">当前竞价<i class="cn">:</i></div>
<div class="val" style="left:339px;top:469px;font-size:14px">300</div>
<div class="ul" style="left:339px;top:495px;width:152px"></div>
<div class="lb" style="top:502px">过期时间<i class="cn">:</i></div>
<div class="box" style="left:114px;top:496px;width:521px;height:33px"><div class="val" style="left:5px;top:6px;font-size:14.800px;line-height:20px;color:#555">2022-03-31T23:25:01+08:00</div>
<svg class="abs" style="left:491px;top:6px" width="22" height="18" viewBox="0 0 22 18"><rect x=".5" y=".5" width="21" height="17" fill="#fff" stroke="#4bc8af" stroke-width="1"/><rect x="0" y="0" width="22" height="4" fill="#4bc8af"/><rect x="1.500" y="2" width="2" height="1" fill="#fff"/><rect x="18.500" y="2" width="2" height="1" fill="#fff"/><g fill="#3cc4a9"><rect x="6" y="8" width="2" height="2"/><rect x="10" y="8" width="2" height="2"/><rect x="14" y="8" width="2" height="2"/><rect x="6" y="12" width="2" height="2"/><rect x="10" y="12" width="2" height="2"/><rect x="14" y="12" width="2" height="2"/></g></svg></div>
<div class="lb" style="top:536px">投放地区<i class="cn">:</i></div>
<div class="val" style="left:114px;top:537px;color:#999">竖线或逗号分隔，支持国家、地区、城市、运营商、ASN</div>
<div class="ul" style="left:114px;top:563px;width:460px"></div>
<div class="box" style="left:574px;top:529px;width:60px;height:34px;border-radius:0 4px 4px 0"><div class="val" style="left:10px;top:7px;color:#bbb">不限</div><div class="arr" style="left:39px;top:10px"></div></div>
<div class="abs" style="left:30px;top:579px;width:98px;height:30px;border-radius:3px;box-shadow:0 2px 5px rgba(0,0,0,.16),0 2px 10px rgba(0,0,0,.12)"></div>
<div class="fbtn" style="left:30px;background:#00bcd4;border-radius:3px 0 0 3px">保存</div>
<div class="fbtn" style="left:79px;background:#fe483e;border-radius:0 3px 3px 0;width:50px">取消</div>
</div>
</div></body></html>
